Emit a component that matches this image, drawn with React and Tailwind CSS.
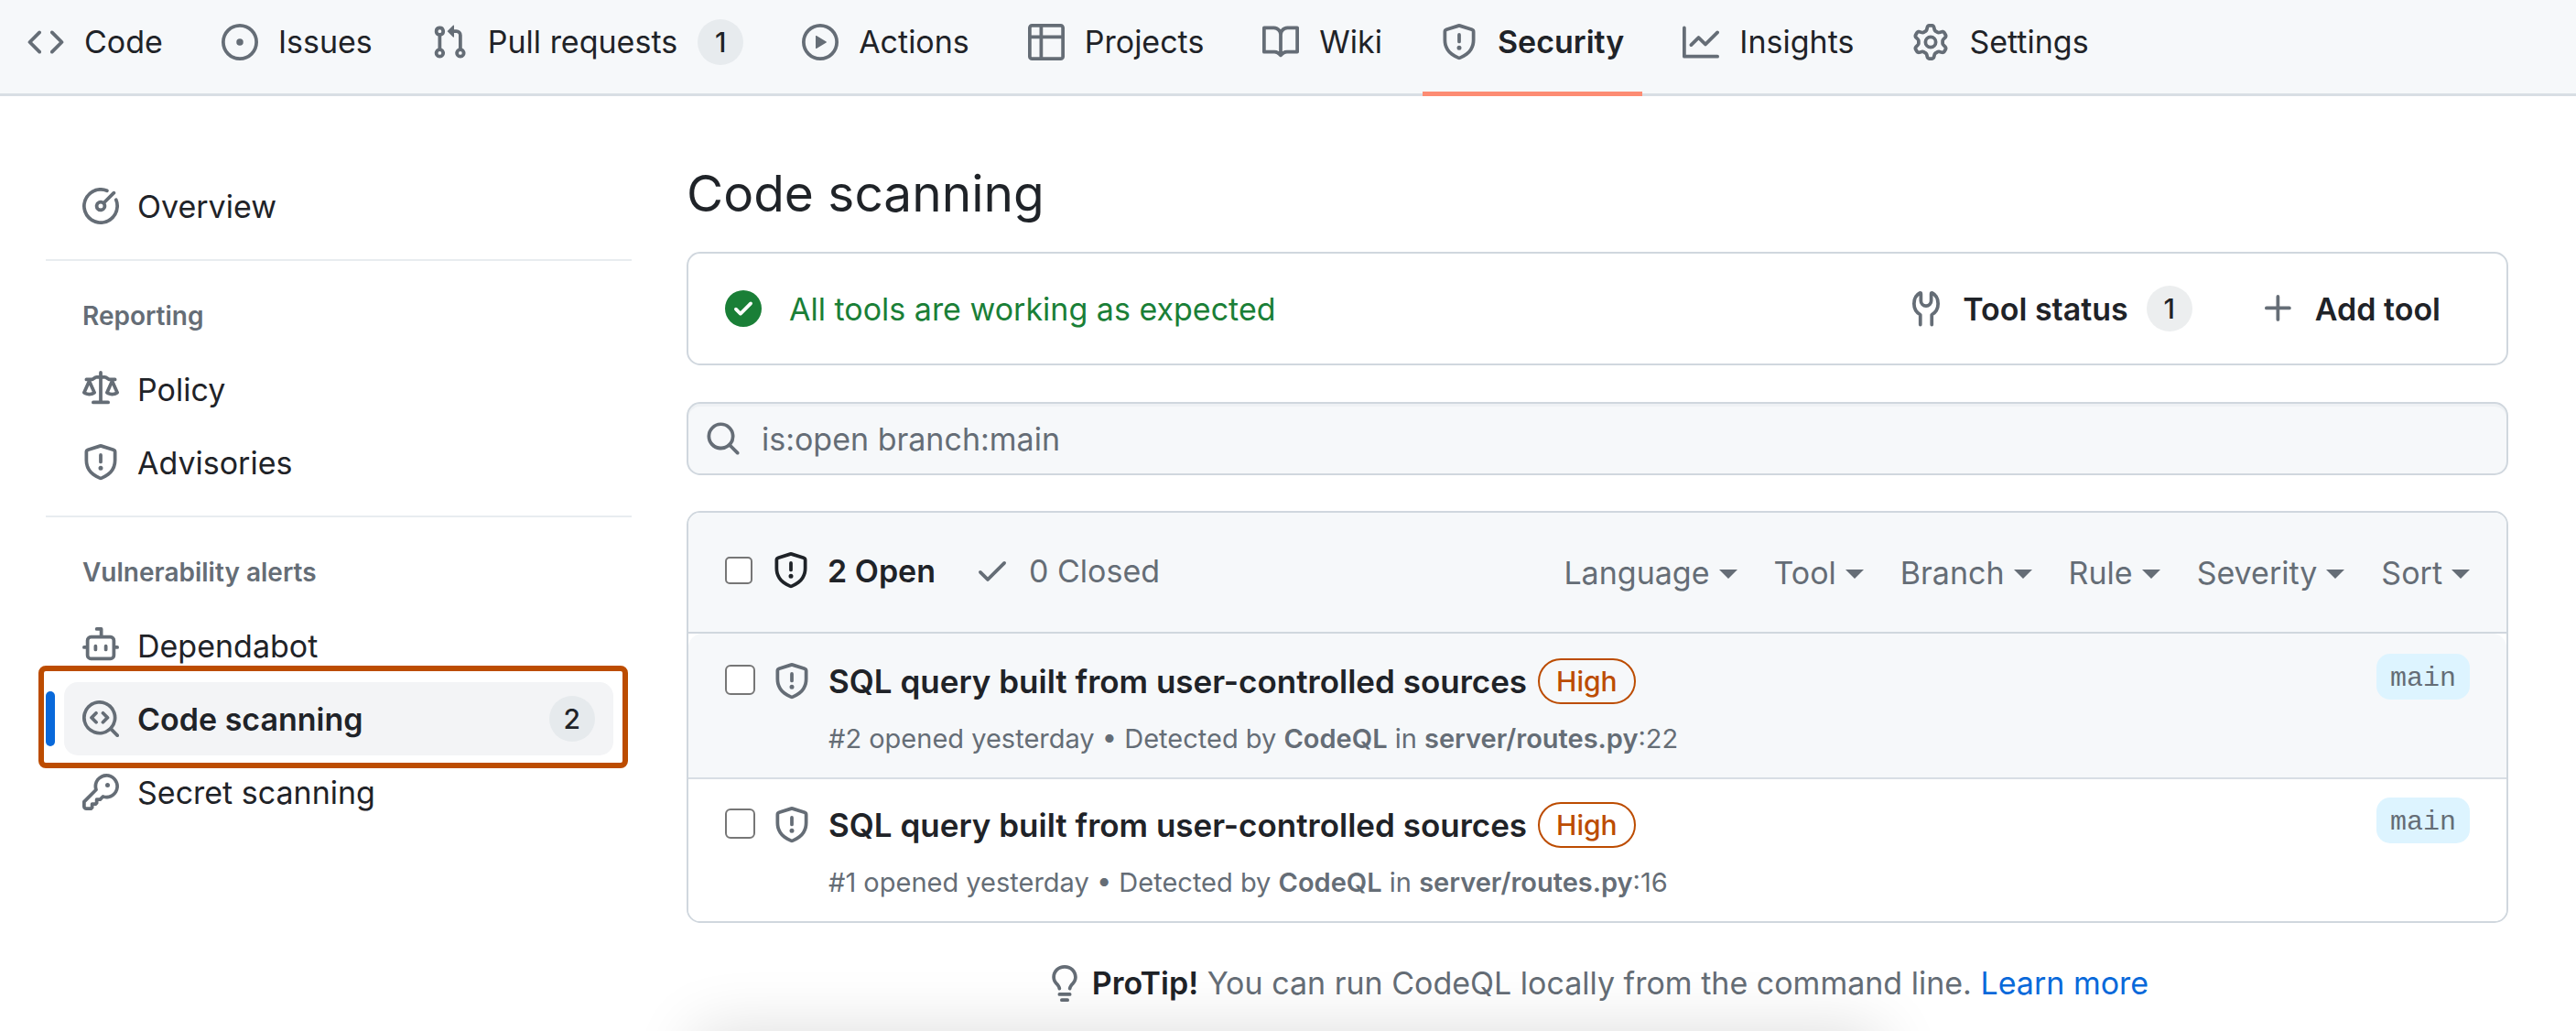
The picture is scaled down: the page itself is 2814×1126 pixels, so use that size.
const ICONS = {
  code: "m11.28 3.22 4.25 4.25a.75.75 0 0 1 0 1.06l-4.25 4.25a.749.749 0 0 1-1.275-.326.749.749 0 0 1 .215-.734L13.94 8l-3.72-3.72a.749.749 0 0 1 .326-1.275.749.749 0 0 1 .734.215Zm-6.56 0a.751.751 0 0 1 1.042.018.751.751 0 0 1 .018 1.042L2.06 8l3.72 3.72a.749.749 0 0 1-.326 1.275.749.749 0 0 1-.734-.215L.47 8.53a.75.75 0 0 1 0-1.06Z",
  issue: "M8 9.5a1.5 1.5 0 1 0 0-3 1.5 1.5 0 0 0 0 3ZM8 0a8 8 0 1 1 0 16A8 8 0 0 1 8 0ZM1.5 8a6.5 6.5 0 1 0 13 0 6.5 6.5 0 0 0-13 0Z",
  pull: "M1.5 3.25a2.25 2.25 0 1 1 3 2.122v5.256a2.251 2.251 0 1 1-1.5 0V5.372A2.25 2.25 0 0 1 1.5 3.25Zm5.677-.177L9.573.677A.25.25 0 0 1 10 .854V2.5h1A2.5 2.5 0 0 1 13.5 5v5.628a2.251 2.251 0 1 1-1.5 0V5a1 1 0 0 0-1-1h-1v1.646a.25.25 0 0 1-.427.177L7.177 3.427a.25.25 0 0 1 0-.354ZM3.75 2.5a.75.75 0 1 0 0 1.5.75.75 0 0 0 0-1.5Zm0 9.5a.75.75 0 1 0 0 1.5.75.75 0 0 0 0-1.5Zm8.25.75a.75.75 0 1 0 1.5 0 .75.75 0 0 0-1.5 0Z",
  play: "M8 0a8 8 0 1 1 0 16A8 8 0 0 1 8 0ZM1.5 8a6.5 6.5 0 1 0 13 0 6.5 6.5 0 0 0-13 0Zm4.879-2.773 4.264 2.559a.25.25 0 0 1 0 .428l-4.264 2.559A.25.25 0 0 1 6 10.559V5.442a.25.25 0 0 1 .379-.215Z",
  table: "M0 1.75C0 .784.784 0 1.75 0h12.5C15.216 0 16 .784 16 1.75v12.5A1.75 1.75 0 0 1 14.25 16H1.75A1.75 1.75 0 0 1 0 14.25ZM6.5 6.5v8h7.75a.25.25 0 0 0 .25-.25V6.5Zm8-1.5V1.75a.25.25 0 0 0-.25-.25H6.5V5Zm-13 1.5v7.75c0 .138.112.25.25.25H5v-8ZM5 5V1.5H1.75a.25.25 0 0 0-.25.25V5Z",
  book: "M0 1.75A.75.75 0 0 1 .75 1h4.253c1.227 0 2.317.59 3 1.501A3.743 3.743 0 0 1 11.006 1h4.245a.75.75 0 0 1 .75.75v10.5a.75.75 0 0 1-.75.75h-4.507a2.25 2.25 0 0 0-1.591.659l-.622.621a.75.75 0 0 1-1.06 0l-.622-.621A2.25 2.25 0 0 0 5.258 13H.75a.75.75 0 0 1-.75-.75Zm7.251 10.324.004-5.073-.002-2.253A2.25 2.25 0 0 0 5.003 2.5H1.5v9h3.757a3.75 3.75 0 0 1 1.994.574ZM8.755 4.75l-.004 7.322a3.752 3.752 0 0 1 1.992-.572H14.5v-9h-3.495a2.25 2.25 0 0 0-2.25 2.25Z",
  shield: "M7.467.133a1.748 1.748 0 0 1 1.066 0l5.25 1.68A1.75 1.75 0 0 1 15 3.48V7c0 1.566-.32 3.182-1.303 4.682-.983 1.498-2.585 2.813-5.032 3.855a1.697 1.697 0 0 1-1.33 0c-2.447-1.042-4.049-2.357-5.032-3.855C1.32 10.182 1 8.566 1 7V3.48a1.75 1.75 0 0 1 1.217-1.667Zm.61 1.429a.25.25 0 0 0-.153 0l-5.25 1.68a.25.25 0 0 0-.174.238V7c0 1.358.275 2.666 1.057 3.86.784 1.194 2.121 2.34 4.366 3.297a.196.196 0 0 0 .154 0c2.245-.956 3.582-2.104 4.366-3.298C13.225 9.666 13.5 8.36 13.5 7V3.48a.251.251 0 0 0-.174-.237l-5.25-1.68ZM8.75 4.75v3a.75.75 0 0 1-1.5 0v-3a.75.75 0 0 1 1.5 0ZM9 10.5a1 1 0 1 1-2 0 1 1 0 0 1 2 0Z",
  graph: "M1.5 1.75V13.5h13.75a.75.75 0 0 1 0 1.5H.75a.75.75 0 0 1-.75-.75V1.75a.75.75 0 0 1 1.5 0Zm14.28 2.53-5.25 5.25a.75.75 0 0 1-1.06 0L7 7.06 4.28 9.78a.751.751 0 0 1-1.042-.018.751.751 0 0 1-.018-1.042l3.25-3.25a.75.75 0 0 1 1.06 0L10 7.94l4.72-4.72a.751.751 0 0 1 1.042.018.751.751 0 0 1 .018 1.042Z",
  gear: "M8 0a8.2 8.2 0 0 1 .701.031C9.444.095 9.99.645 10.16 1.29l.288 1.107c.018.066.079.158.212.224.231.114.454.243.668.386.123.082.233.09.299.071l1.103-.303c.644-.176 1.392.021 1.82.63.27.385.506.792.704 1.218.315.675.111 1.422-.364 1.891l-.814.806c-.049.048-.098.147-.088.294.016.257.016.515 0 .772-.01.147.038.246.088.294l.814.806c.475.469.679 1.216.364 1.891a7.977 7.977 0 0 1-.704 1.217c-.428.61-1.176.807-1.82.63l-1.102-.302c-.067-.019-.177-.011-.3.071a5.909 5.909 0 0 1-.668.386c-.133.066-.194.158-.211.224l-.29 1.106c-.168.646-.715 1.196-1.458 1.26a8.006 8.006 0 0 1-1.402 0c-.743-.064-1.289-.614-1.458-1.26l-.289-1.106c-.018-.066-.079-.158-.212-.224a5.738 5.738 0 0 1-.668-.386c-.123-.082-.233-.09-.299-.071l-1.103.303c-.644.176-1.392-.021-1.82-.63a8.12 8.12 0 0 1-.704-1.218c-.315-.675-.111-1.422.363-1.891l.815-.806c.05-.048.098-.147.088-.294a6.214 6.214 0 0 1 0-.772c.01-.147-.038-.246-.088-.294l-.815-.806C.635 6.045.431 5.298.746 4.623a7.92 7.92 0 0 1 .704-1.217c.428-.61 1.176-.807 1.82-.63l1.102.302c.067.019.177.011.3-.071.214-.143.437-.272.668-.386.133-.066.194-.158.211-.224l.29-1.106C6.009.645 6.556.095 7.299.03 7.53.01 7.764 0 8 0Zm-.571 1.525c-.036.003-.108.036-.137.146l-.289 1.105c-.147.561-.549.967-.998 1.189-.173.086-.34.183-.5.29-.417.278-.97.423-1.529.27l-1.103-.303c-.109-.03-.175.016-.195.045-.22.312-.412.644-.573.99-.014.031-.021.11.059.19l.815.806c.411.406.562.957.53 1.456a4.709 4.709 0 0 0 0 .582c.032.499-.119 1.05-.53 1.456l-.815.806c-.081.08-.073.159-.059.19.162.346.353.677.573.989.02.03.085.076.195.046l1.102-.303c.56-.153 1.113-.008 1.53.27.161.107.328.204.501.29.447.222.85.629.997 1.189l.289 1.105c.029.109.101.143.137.146a6.6 6.6 0 0 0 1.142 0c.036-.003.108-.036.137-.146l.289-1.105c.147-.561.549-.967.998-1.189.173-.086.34-.183.5-.29.417-.278.97-.423 1.529-.27l1.103.303c.109.029.175-.016.195-.045.22-.313.411-.644.573-.99.014-.031.021-.11-.059-.19l-.815-.806c-.411-.406-.562-.957-.53-1.456a4.709 4.709 0 0 0 0-.582c-.032-.499.119-1.05.53-1.456l.815-.806c.081-.08.073-.159.059-.19a6.464 6.464 0 0 0-.573-.989c-.02-.03-.085-.076-.195-.046l-1.102.303c-.56.153-1.113.008-1.53-.27a4.44 4.44 0 0 0-.501-.29c-.447-.222-.85-.629-.997-1.189l-.289-1.105c-.029-.11-.101-.143-.137-.146a6.6 6.6 0 0 0-1.142 0ZM11 8a3 3 0 1 1-6 0 3 3 0 0 1 6 0ZM9.5 8a1.5 1.5 0 1 0-3.001.001A1.5 1.5 0 0 0 9.5 8Z",
  meter: "M8 1.5a6.5 6.5 0 1 0 6.016 4.035.75.75 0 0 1 1.388-.57 8 8 0 1 1-4.37-4.37.75.75 0 0 1-.569 1.389A6.473 6.473 0 0 0 8 1.5Zm6.28.22a.75.75 0 0 1 0 1.06l-4.063 4.064a2.5 2.5 0 1 1-1.06-1.06L13.22 1.72a.75.75 0 0 1 1.06 0ZM7 8a1 1 0 1 0 2 0 1 1 0 0 0-2 0Z",
  law: "M8.75.75V2h.985c.304 0 .603.08.867.231l1.29.736c.038.022.08.033.124.033h2.234a.75.75 0 0 1 0 1.5h-.427l2.111 4.692a.75.75 0 0 1-.154.838l-.53-.53.529.531-.001.002-.002.002-.006.006-.006.005-.01.01-.045.04c-.21.176-.441.327-.686.45C14.556 10.78 13.88 11 13 11a4.498 4.498 0 0 1-2.023-.454 3.544 3.544 0 0 1-.686-.45l-.045-.04-.016-.015-.006-.006-.004-.004v-.001a.75.75 0 0 1-.154-.838L12.178 4.5h-.162c-.305 0-.604-.079-.868-.231l-1.29-.736a.245.245 0 0 0-.124-.033H8.75V13h2.5a.75.75 0 0 1 0 1.5h-6.5a.75.75 0 0 1 0-1.5h2.5V3.5h-.984a.245.245 0 0 0-.124.033l-1.289.737c-.265.15-.564.23-.869.23h-.162l2.112 4.692a.75.75 0 0 1-.154.838l-.53-.53.529.531-.001.002-.002.002-.006.006-.016.015-.045.04c-.21.176-.441.327-.686.45C4.556 10.78 3.88 11 3 11a4.498 4.498 0 0 1-2.023-.454 3.544 3.544 0 0 1-.686-.45l-.045-.04-.016-.015-.006-.006-.004-.004v-.001a.75.75 0 0 1-.154-.838L2.178 4.5H1.75a.75.75 0 0 1 0-1.5h2.234a.249.249 0 0 0 .125-.033l1.288-.737c.265-.15.564-.23.869-.23h.984V.75a.75.75 0 0 1 1.5 0Zm2.945 8.477c.285.135.718.273 1.305.273s1.02-.138 1.305-.273L13 6.327Zm-10 0c.285.135.718.273 1.305.273s1.02-.138 1.305-.273L3 6.327Z",
  dependabot: "M5.75 7.5a.75.75 0 0 1 .75.75v1.5a.75.75 0 0 1-1.5 0v-1.5a.75.75 0 0 1 .75-.75Zm5.25.75a.75.75 0 0 0-1.5 0v1.5a.75.75 0 0 0 1.5 0v-1.5ZM6.25 0h2A.75.75 0 0 1 9 .75V3.5h3.25a2.25 2.25 0 0 1 2.25 2.25V8h.75a.75.75 0 0 1 0 1.5h-.75v2.75a2.25 2.25 0 0 1-2.25 2.25h-8.5a2.25 2.25 0 0 1-2.25-2.25V9.5H.75a.75.75 0 0 1 0-1.5h.75V5.75A2.25 2.25 0 0 1 3.75 3.5H7.5v-2H6.25a.75.75 0 0 1 0-1.5ZM3 5.75v6.5c0 .414.336.75.75.75h8.5a.75.75 0 0 0 .75-.75v-6.5a.75.75 0 0 0-.75-.75h-8.5a.75.75 0 0 0-.75.75Z",
  codescan: "M8.47 4.97a.75.75 0 0 0 0 1.06L9.94 7.5 8.47 8.97a.75.75 0 1 0 1.06 1.06l2-2a.75.75 0 0 0 0-1.06l-2-2a.75.75 0 0 0-1.06 0ZM6.53 6.03a.75.75 0 0 0-1.06-1.06l-2 2a.75.75 0 0 0 0 1.06l2 2a.75.75 0 1 0 1.06-1.06L5.06 7.5l1.47-1.47ZM12.246 13.307a7.501 7.501 0 1 1 1.06-1.06l2.474 2.473a.749.749 0 0 1-.326 1.275.749.749 0 0 1-.734-.215ZM1.5 7.5a6.002 6.002 0 0 0 3.608 5.504 6.002 6.002 0 0 0 6.486-1.117.748.748 0 0 1 .292-.293A6 6 0 1 0 1.5 7.5Z",
  key: "M10.5 0a5.499 5.499 0 1 1-1.288 10.848l-.932.932a.749.749 0 0 1-.53.22H7v.75a.749.749 0 0 1-.22.53l-.5.5a.749.749 0 0 1-.53.22H5v.75a.749.749 0 0 1-.22.53l-.5.5a.749.749 0 0 1-.53.22h-2A1.75 1.75 0 0 1 0 14.25v-2c0-.199.079-.389.22-.53l4.932-4.932A5.5 5.5 0 0 1 10.5 0Zm-4 5.5c-.001.431.069.86.205 1.269a.75.75 0 0 1-.181.768L1.5 12.56v1.69c0 .138.112.25.25.25h1.69l.06-.06v-1.19a.75.75 0 0 1 .75-.75h1.19l.06-.06v-1.19a.75.75 0 0 1 .75-.75h1.19l1.023-1.025a.75.75 0 0 1 .768-.18A4 4 0 1 0 6.5 5.5ZM11 6a1 1 0 1 1 0-2 1 1 0 0 1 0 2Z",
  checkCircle: "M8 16A8 8 0 1 1 8 0a8 8 0 0 1 0 16Zm3.78-9.72a.751.751 0 0 0-.018-1.042.751.751 0 0 0-1.042-.018L6.75 9.19 5.28 7.72a.751.751 0 0 0-1.042.018.751.751 0 0 0-.018 1.042l2 2a.75.75 0 0 0 1.06 0Z",
  search: "M10.68 11.74a6 6 0 0 1-7.922-8.982 6 6 0 0 1 8.982 7.922l3.04 3.04a.749.749 0 0 1-.326 1.275.749.749 0 0 1-.734-.215ZM11.5 7a4.499 4.499 0 1 0-8.997 0A4.499 4.499 0 0 0 11.5 7Z",
  check: "M13.78 4.22a.75.75 0 0 1 0 1.06l-7.25 7.25a.75.75 0 0 1-1.06 0L2.22 9.28a.751.751 0 0 1 .018-1.042.751.751 0 0 1 1.042-.018L6 10.94l6.72-6.72a.75.75 0 0 1 1.06 0Z",
  plus: "M7.75 2a.75.75 0 0 1 .75.75V7h4.25a.75.75 0 0 1 0 1.5H8.5v4.25a.75.75 0 0 1-1.5 0V8.5H2.75a.75.75 0 0 1 0-1.5H7V2.75A.75.75 0 0 1 7.75 2Z",
  bulb: "M8 1.5c-2.363 0-4 1.69-4 3.75 0 .984.424 1.625.984 2.304l.214.253c.223.264.47.556.673.848.284.411.537.896.621 1.49a.75.75 0 0 1-1.484.211c-.04-.282-.163-.547-.37-.847a8.456 8.456 0 0 0-.542-.68c-.084-.1-.173-.205-.268-.32C3.201 7.75 2.5 6.766 2.5 5.25 2.5 2.31 4.863 0 8 0s5.5 2.31 5.5 5.25c0 1.516-.701 2.5-1.328 3.259-.095.115-.184.22-.268.319-.207.245-.383.453-.541.681-.208.3-.33.565-.37.847a.751.751 0 0 1-1.485-.212c.084-.593.337-1.078.621-1.489.203-.292.45-.584.673-.848.075-.088.147-.173.213-.253.561-.679.985-1.32.985-2.304 0-2.06-1.637-3.75-4-3.75ZM5.75 12h4.5a.75.75 0 0 1 0 1.5h-4.5a.75.75 0 0 1 0-1.5ZM6 15.25a.75.75 0 0 1 .75-.75h2.5a.75.75 0 0 1 0 1.5h-2.5a.75.75 0 0 1-.75-.75Z",
};

function Icon({ name, className = "text-[#656d76]" }) {
  return (
    <svg viewBox="0 0 16 16" fill="currentColor" fillRule="evenodd" aria-hidden="true" className={`size-10 shrink-0 ${className}`}>
      <path d={ICONS[name]} />
    </svg>
  );
}

function Wrench() {
  return (
    <svg viewBox="0 0 16 16" fill="none" stroke="currentColor" strokeWidth="1.5" strokeLinecap="round" strokeLinejoin="round" aria-hidden="true" className="size-10 shrink-0 text-[#656d76]">
      <path d="M5.5 15V10.7C3.8 9.7 2.75 7.9 2.75 5.9C2.75 3.8 3.7 2 5.3 1.2Q5.75 1 5.75 1.6V4.6A2.25 2.25 0 0 0 10.25 4.6V1.6Q10.25 1 10.7 1.2C12.3 2 13.25 3.8 13.25 5.9C13.25 7.9 12.2 9.7 10.5 10.7V15" />
    </svg>
  );
}

function Caret() {
  return (
    <svg viewBox="0 0 20 10" fill="currentColor" aria-hidden="true" className="mt-1 h-[10px] w-5 shrink-0">
      <path d="M0 0h20L10 10Z" />
    </svg>
  );
}

function Counter({ children, className = "bg-[#e7ebee]" }) {
  return (
    <span className={`flex h-[50px] min-w-[50px] items-center justify-center rounded-full px-4 text-[30px] leading-none font-medium ${className}`}>
      {children}
    </span>
  );
}

const TABS = [
  { icon: "code", label: "Code" },
  { icon: "issue", label: "Issues" },
  { icon: "pull", label: "Pull requests", count: 1 },
  { icon: "play", label: "Actions" },
  { icon: "table", label: "Projects" },
  { icon: "book", label: "Wiki" },
  { icon: "shield", label: "Security", active: true },
  { icon: "graph", label: "Insights" },
  { icon: "gear", label: "Settings" },
];

function TopNav() {
  return (
    <nav aria-label="Repository" className="flex h-[105px] gap-6 border-b-[3px] border-[#d8dee4] bg-[#f6f8fa] px-[10px]">
      {TABS.map((t) => (
        <a
          key={t.label}
          href="#"
          aria-current={t.active ? "page" : undefined}
          className={`-mb-[3px] flex items-center gap-[22px] border-b-[5px] px-5 pb-2 text-[34px] leading-[50px] ${t.active ? "border-[#fd8c73] font-semibold" : "border-transparent"}`}
        >
          <Icon name={t.icon} />
          <span>{t.label}</span>
          {t.count && <Counter>{t.count}</Counter>}
        </a>
      ))}
    </nav>
  );
}

function SideItem({ icon, label }) {
  return (
    <li>
      <a href="#" className="flex h-20 items-center gap-5 px-10 text-[34px]">
        <Icon name={icon} />
        {label}
      </a>
    </li>
  );
}

function SideHeading({ children }) {
  return <h2 className="flex h-20 items-center px-10 text-[28px] font-semibold text-[#656d76]">{children}</h2>;
}

function Divider() {
  return <hr className="mt-[18px] mb-5 border-t-2 border-[#e8ecf0]" />;
}

function Sidebar() {
  return (
    <nav aria-label="Security" className="w-[640px] shrink-0">
      <ul>
        <SideItem icon="meter" label="Overview" />
      </ul>
      <Divider />
      <SideHeading>Reporting</SideHeading>
      <ul>
        <SideItem icon="law" label="Policy" />
        <SideItem icon="shield" label="Advisories" />
      </ul>
      <Divider />
      <SideHeading>Vulnerability alerts</SideHeading>
      <ul>
        <SideItem icon="dependabot" label="Dependabot" />
        <li className="relative flex items-center">
          <span className="absolute -top-[18px] right-1 -bottom-[14px] -left-2 rounded-lg border-[6px] border-[#bc4c00]" />
          <span className="mr-[10px] h-[60px] w-[10px] rounded-full bg-[#0969da]" />
          <a href="#" aria-current="page" className="mr-5 flex h-20 flex-1 items-center gap-5 rounded-[15px] bg-[#f3f4f6] px-5 text-[34px] font-semibold">
            <Icon name="codescan" />
            Code scanning
            <Counter className="ml-auto bg-[#e6eaed]">2</Counter>
          </a>
        </li>
        <SideItem icon="key" label="Secret scanning" />
      </ul>
    </nav>
  );
}

const ALERTS = [
  { id: 2, line: 22, selected: true },
  { id: 1, line: 16, selected: false },
];

function AlertRow({ id, line, selected }) {
  return (
    <li className={`flex items-start border-t-2 border-[#d8dee4] px-10 pt-5 pb-5 first:border-t-0 first:pt-[22px] ${selected ? "rounded-t-[15px] bg-[#f6f8fa]" : "bg-white"}`}>
      <input
        type="checkbox"
        aria-label={`Select alert #${id}`}
        className="mt-3 size-[33px] shrink-0 appearance-none rounded-[6px] border-2 border-[#767676] bg-white"
      />
      <span className="mx-5 mt-[10px]">
        <Icon name="shield" />
      </span>
      <div className="flex-1">
        <div className="flex h-[60px] items-center gap-3">
          <a href="#" className="text-[35px] font-semibold">SQL query built from user-controlled sources</a>
          <span className="flex h-[50px] items-center rounded-full border-2 border-[#bc4c00] px-[18px] text-[30px] font-medium text-[#bc4c00]">High</span>
        </div>
        <p className="mt-[10px] text-[29px] leading-[45px] text-[#656d76]">
          #{id} opened yesterday • Detected by <b className="font-semibold">CodeQL</b> in <b className="font-semibold">server/routes.py</b>:{line}
        </p>
      </div>
      <a href="#" className="flex h-[50px] items-center rounded-[15px] bg-[#ddf4ff] px-[15px] pt-1 font-['Liberation_Mono',monospace] text-[30px] text-[#656d76]">main</a>
    </li>
  );
}

export default function App() {
  return (
    <div className="relative min-h-screen overflow-hidden bg-white font-['Inter',sans-serif] text-[#1f2328]">
      <TopNav />
      <div className="flex gap-[60px] pr-[74px] pl-[50px] pt-[70px]">
        <div className="shrink-0 pt-[10px]">
          <Sidebar />
        </div>
        <main className="min-w-0 flex-1">
          <h1 className="mb-7 flex h-[72px] items-center text-[55px]">Code scanning</h1>

          <section className="flex h-[124px] items-center rounded-[15px] border-2 border-[#d0d7de] px-10">
            <Icon name="checkCircle" className="text-[#1a7f37]" />
            <p className="ml-[30px] text-[34px] text-[#1a7f37]">All tools are working as expected</p>
            <button type="button" className="ml-auto flex items-center gap-5 px-[30px] text-[34px] font-semibold">
              <Wrench />
              Tool status
              <Counter className="bg-[#eceeef]">1</Counter>
            </button>
            <button type="button" className="ml-11 flex items-center gap-5 pr-8 text-[34px] font-semibold">
              <Icon name="plus" />
              Add tool
            </button>
          </section>

          <label className="mt-10 flex h-20 items-center gap-[22px] rounded-[15px] border-2 border-[#d0d7de] bg-[#f6f8fa] px-[18px] shadow-[inset_0_3px_0_rgba(208,215,222,0.2)]">
            <Icon name="search" />
            <input type="text" aria-label="Search alerts" defaultValue="is:open branch:main" className="flex-1 bg-transparent text-[34px] text-[#656d76] outline-none" />
          </label>

          <section className="mt-[39px] rounded-[15px] border-2 border-[#d0d7de]">
            <header className="flex h-[132px] items-center rounded-t-[13px] border-b-2 border-[#d0d7de] bg-[#f6f8fa] px-10">
              <div className="flex items-center pb-1 text-[34px]">
                <input type="checkbox" aria-label="Select all alerts" className="size-[30px] shrink-0 appearance-none rounded-[5px] border-2 border-[#767676] bg-white" />
                <a href="#" className="ml-[22px] flex items-center gap-5 font-semibold">
                  <Icon name="shield" className="text-[#1f2328]" />
                  2 Open
                </a>
                <a href="#" className="ml-[42px] flex items-center gap-5 text-[#656d76]">
                  <Icon name="check" />
                  0 Closed
                </a>
              </div>
              <div className="ml-auto flex gap-10 text-[34px] text-[#656d76]">
                {["Language", "Tool", "Branch", "Rule", "Severity", "Sort"].map((f) => (
                  <button key={f} type="button" className="flex items-center gap-[10px]">
                    {f}
                    <Caret />
                  </button>
                ))}
              </div>
            </header>
            <ul className="overflow-hidden rounded-b-[13px]">
              {ALERTS.map((a) => (
                <AlertRow key={a.id} {...a} />
              ))}
            </ul>
          </section>

          <p className="mt-10 flex items-center justify-center gap-[10px] text-[34px] leading-[52px] text-[#656d76]">
            <Icon name="bulb" />
            <span>
              <b className="font-semibold text-[#1f2328]">ProTip!</b> You can run CodeQL locally from the command line.{" "}
              <a href="#" className="text-[#0969da]">Learn more</a>
            </span>
          </p>
        </main>
      </div>
      <div aria-hidden="true" className="pointer-events-none absolute inset-x-[27%] top-full h-20 shadow-[0_0_70px_rgba(0,0,0,0.14)]" />
    </div>
  );
}
